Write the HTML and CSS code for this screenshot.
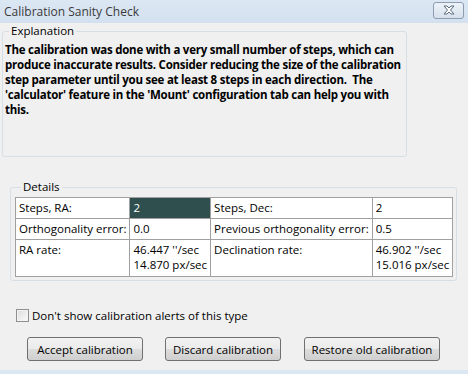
FILE: index.html
```html
<!DOCTYPE html>
<html lang="en">
<head>
    <meta charset="UTF-8">
    <meta name="viewport" content="width=device-width, initial-scale=1.0">
    <title>Calibration Sanity Check</title>
    <link rel="stylesheet" href="styles.css">
</head>
<body>
    <div class="window">
        <div class="titlebar">
            <span class="title">Calibration Sanity Check</span>
            <button class="close-button" aria-label="Close">
                <svg width="14" height="10" viewBox="0 0 14 10">
                    <path d="M2 1 L5 1 L7 3 L9 1 L12 1 L8.5 5 L12 9 L9 9 L7 7 L5 9 L2 9 L5.5 5 Z" fill="#ffffff" stroke="#5a6a80" stroke-width="1" stroke-linejoin="round"/>
                </svg>
            </button>
        </div>

        <div class="content">
            <fieldset class="group explanation">
                <legend>Explanation</legend>
                <p class="explain-text">The calibration was done with a very small number of steps, which can<br>produce inaccurate results. Consider reducing the size of the calibration<br>step parameter until you see at least 8 steps in each direction.&nbsp; The<br>'calculator' feature in the 'Mount' configuration tab can help you with<br>this.</p>
            </fieldset>

            <fieldset class="group details">
                <legend>Details</legend>
                <table class="details-table">
                    <tr>
                        <td class="col-label">Steps, RA:</td>
                        <td class="col-value highlight">2</td>
                        <td class="col-label2">Steps, Dec:</td>
                        <td class="col-value2">2</td>
                    </tr>
                    <tr>
                        <td>Orthogonality error:</td>
                        <td>0.0</td>
                        <td>Previous orthogonality error:</td>
                        <td>0.5</td>
                    </tr>
                    <tr class="tall">
                        <td>RA rate:</td>
                        <td>46.447 ''/sec<br>14.870 px/sec</td>
                        <td>Declination rate:</td>
                        <td>46.902 ''/sec<br>15.016 px/sec</td>
                    </tr>
                </table>
            </fieldset>

            <label class="check-row">
                <span class="checkbox"></span>
                Don't show calibration alerts of this type
            </label>

            <div class="button-row">
                <button class="dlg-button accept">Accept calibration</button>
                <button class="dlg-button discard">Discard calibration</button>
                <button class="dlg-button restore">Restore old calibration</button>
            </div>
        </div>
        <div class="bottom-edge"></div>
    </div>
</body>
</html>
```

FILE: styles.css
```css
body {
    margin: 0;
    font-family: 'Open Sans', 'Liberation Sans', sans-serif;
    font-size: 11.5px;
    color: #000;
    background-color: #f0f0f0;
}
.window {
    width: 468px;
    height: 374px;
    display: flex;
    flex-direction: column;
    background-color: #f0f0f0;
    overflow: hidden;
}
.titlebar {
    height: 23px;
    flex: none;
    display: flex;
    align-items: center;
    justify-content: space-between;
    padding: 0 4px 0 4px;
    background: linear-gradient(#dce7f4, #d3e0ef);
}
.title {
    font-size: 12px;
    color: #3a3a3a;
    margin-top: -1px;
}
.close-button {
    width: 31px;
    height: 17px;
    margin-top: -3px;
    padding: 0;
    border: 1px solid #8d9cb0;
    border-radius: 3px;
    background: linear-gradient(#eef3f9, #d6e0ec);
    display: flex;
    align-items: center;
    justify-content: center;
}
.content {
    flex: 1;
    display: flex;
    flex-direction: column;
}
.group {
    border: 1px solid #d5dfe5;
    border-radius: 3px;
    margin: 0;
    box-sizing: border-box;
}
.group legend {
    padding: 0 2px;
    margin-left: 4px;
    line-height: 16px;
}
.explanation {
    margin-left: 2px;
    width: 405px;
    height: 134px;
    padding: 3px 2px 0 2px;
}
.explain-text {
    margin: 0;
    font-weight: bold;
    line-height: 15px;
    letter-spacing: -0.24px;
    white-space: nowrap;
}
.details {
    margin-left: 10px;
    margin-top: 22px;
    width: 447px;
    padding: 2px 3px 3px 4px;
}
.details legend {
    margin-left: 6px;
}
.details-table {
    border-collapse: collapse;
    width: 437px;
    background-color: #fff;
}
.details-table td {
    border: 1px solid #a0a0a0;
    padding: 2px 3px;
    line-height: 15px;
    height: 16px;
    vertical-align: top;
    white-space: nowrap;
}
.details-table .tall td {
    height: 32px;
}
.col-label { width: 108px; }
.col-value { width: 73px; }
.col-label2 { width: 154px; }
.highlight {
    background-color: #2f4f4f;
    color: #fff;
}
.check-row {
    display: flex;
    align-items: center;
    gap: 3px;
    margin: 27px 0 0 16px;
    line-height: 15px;
}
.checkbox {
    width: 11px;
    height: 11px;
    border: 1px solid #8f8f8f;
    background: linear-gradient(135deg, #dcdcdc, #fbfbfb);
    box-shadow: inset 0 0 0 1px #f4f4f4;
}
.button-row {
    display: flex;
    margin: 14px 0 0 27px;
}
.dlg-button {
    height: 24px;
    padding: 0;
    font-family: inherit;
    font-size: inherit;
    color: #000;
    border: 1px solid #707070;
    border-radius: 3px;
    background: linear-gradient(#f2f2f2 0%, #ebebeb 50%, #dddddd 51%, #cfcfcf 100%);
}
.accept { width: 116px; }
.discard { width: 116px; margin-left: 22px; }
.restore { width: 136px; margin-left: 23px; }
.bottom-edge {
    height: 4px;
    flex: none;
    background-color: #dce7f4;
}
```
